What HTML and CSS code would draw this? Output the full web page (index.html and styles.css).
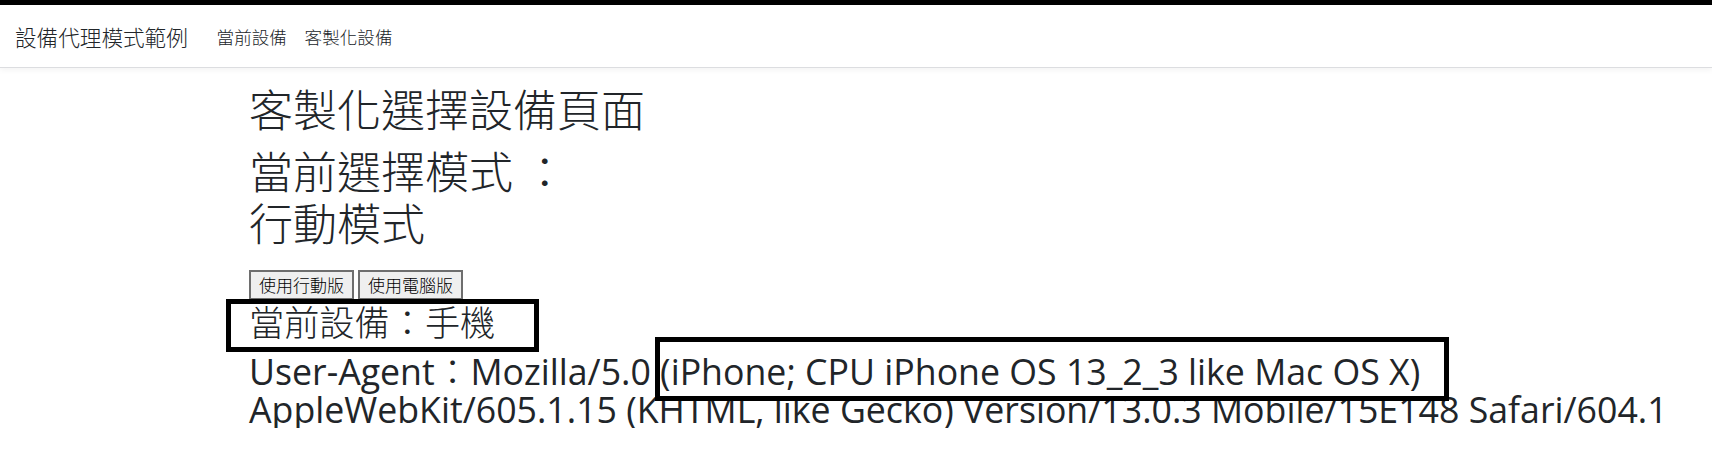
FILE: index.html
```html
<!DOCTYPE html>
<html lang="zh-Hant">
<head>
<meta charset="utf-8">
<title>設備代理模式範例</title>
<link rel="stylesheet" href="styles.css">
</head>
<body>
<div class="topbar"></div>
<nav class="navbar">
  <span class="brand">設備代理模式範例</span>
  <a class="nav-link" href="#">當前設備</a>
  <a class="nav-link" href="#">客製化設備</a>
</nav>
<main class="content">
  <h1 class="title">客製化選擇設備頁面</h1>
  <h1 class="title">當前選擇模式 ：<br>行動模式</h1>
  <div class="buttons">
    <button class="btn" type="button">使用行動版</button>
    <button class="btn" type="button">使用電腦版</button>
  </div>
  <h2 class="device">當前設備：手機</h2>
  <h2 class="ua">User-Agent<span class="colon">：</span>Mozilla/5.0 (iPhone; CPU iPhone OS 13_2_3 like Mac OS X) AppleWebKit/605.1.15 (KHTML, like Gecko) Version/13.0.3 Mobile/15E148 Safari/604.1</h2>
  <div class="mark mark-device"></div>
  <div class="mark mark-ua"></div>
</main>
</body>
</html>
```
FILE: styles.css
```css
html, body {
  margin: 0;
  padding: 0;
  background: #fff;
}
body {
  font-family: "Open Sans", "Noto Sans CJK TC", sans-serif;
  color: #212529;
}
.topbar {
  height: 5px;
  background: #000;
}
.navbar {
  display: flex;
  align-items: center;
  height: 62px;
  padding: 0 15px;
  background: #fff;
  border-bottom: 1px solid #dcdde0;
  box-shadow: 0 2px 6px rgba(0, 0, 0, 0.05);
}
.brand {
  font-family: "Noto Sans CJK TC", sans-serif;
  font-size: 21.6px;
  font-weight: 300;
  color: #212529;
  margin-right: 20px;
}
.nav-link {
  font-family: "Noto Sans CJK TC", sans-serif;
  font-size: 17.6px;
  font-weight: 300;
  color: #212529;
  text-decoration: none;
  padding: 0 8.8px;
}
.content {
  position: relative;
  padding: 14px 0 0 249px;
  width: 1440px;
}
.title {
  font-family: "Noto Sans CJK TC", sans-serif;
  font-size: 44px;
  font-weight: 300;
  line-height: 1.2;
  margin: 0 0 8.8px;
}
.buttons {
  display: flex;
  gap: 4px;
  margin-top: 21px;
}
.btn {
  font-family: "Noto Sans CJK TC", sans-serif;
  font-size: 17px;
  font-weight: 300;
  line-height: 24px;
  color: #000;
  background: #efefef;
  border: 2px solid #6e6e6e;
  border-radius: 0;
  padding: 1px 8px;
  margin: 0;
}
.device {
  font-family: "Noto Sans CJK TC", sans-serif;
  font-size: 35.2px;
  font-weight: 300;
  line-height: 1.2;
  margin: 0 0 8.8px;
}
.ua {
  font-family: "Open Sans", "Noto Sans CJK TC", sans-serif;
  font-size: 35.7px;
  font-weight: 400;
  line-height: 38px;
  margin: 8px 0 0;
}
.colon {
  font-family: "Noto Sans CJK TC", sans-serif;
  font-weight: 300;
}
.mark {
  position: absolute;
  border: 5px solid #000;
  box-sizing: border-box;
}
.mark-device {
  left: 226px;
  top: 231px;
  width: 313px;
  height: 53px;
}
.mark-ua {
  left: 655px;
  top: 269px;
  width: 794px;
  height: 64px;
}
```
